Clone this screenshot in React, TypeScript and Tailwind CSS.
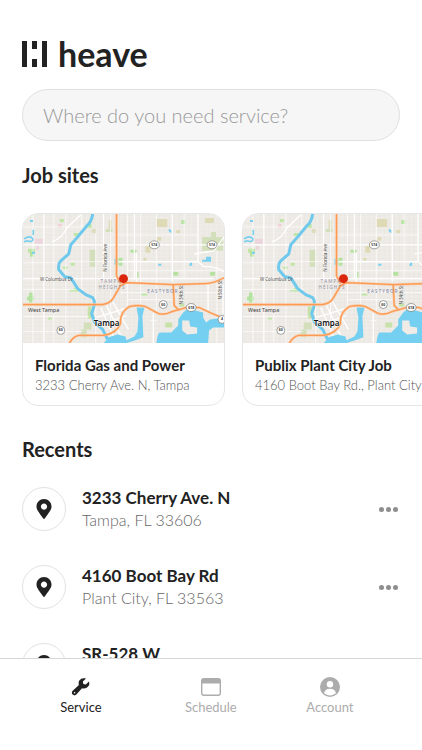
import { FaMapMarkerAlt } from 'react-icons/fa';

const jobSites = [
  { name: 'Florida Gas and Power', address: '3233 Cherry Ave. N, Tampa' },
  { name: 'Publix Plant City Job', address: '4160 Boot Bay Rd., Plant City' },
];

const recents = [
  { street: '3233 Cherry Ave. N', city: 'Tampa, FL 33606' },
  { street: '4160 Boot Bay Rd', city: 'Plant City, FL 33563' },
  { street: 'SR-528 W', city: 'Orlando, FL 32809' },
];

// [x, y, width, height, color]
const parks: [number, number, number, number, string][] = [
  [67, 36, 6, 17, '#d3dfba'],
  [69, 15, 4, 4, '#dedcbc'],
  [83, 15, 7, 3, '#d3dfba'],
  [86, 6, 3, 9, '#dedcbc'],
  [51, 19, 5, 3, '#bfe6a4'],
  [64, 10, 5, 4, '#bfe6a4'],
  [37, 5, 4, 3, '#bfe6a4'],
  [5, 35, 7, 4, '#bfe6a4'],
  [7, 38, 4, 5, '#b5e2a0'],
  [48, 49, 4, 3, '#bfe6a4'],
  [40, 53, 5, 2, '#bfe6a4'],
  [51, 74, 5, 3, '#bfe6a4'],
  [47, 76, 9, 2, '#bfe6a4'],
  [4, 83, 7, 4, '#b5e2a0'],
  [6, 79, 4, 10, '#b5e2a0'],
  [65, 93, 4, 12, '#c6e2a8'],
  [61, 109, 8, 7, '#d3dfba'],
  [58, 116, 6, 8, '#d3dfba'],
  [25, 104, 4, 2, '#bfe6a4'],
  [134, 5, 11, 8, '#dedab6'],
  [159, 6, 4, 4, '#b5e2a0'],
  [183, 4, 9, 5, '#dedab6'],
  [189, 18, 5, 5, '#d3dfba'],
  [180, 23, 21, 14, '#d3dfba'],
  [135, 23, 4, 4, '#dedab6'],
  [154, 16, 4, 3, '#dedab6'],
  [123, 32, 5, 7, '#dedab6'],
  [108, 36, 6, 3, '#b5e2a0'],
  [121, 44, 3, 3, '#dedab6'],
  [114, 58, 2, 6, '#b5e2a0'],
  [151, 58, 5, 4, '#b5e2a0'],
  [188, 58, 5, 4, '#b5e2a0'],
  [96, 44, 4, 8, '#b5e2a0'],
  [119, 80, 6, 2, '#bfe6a4'],
  [143, 109, 7, 5, '#c6e2a8'],
  [157, 90, 5, 3, '#c6e2a8'],
];

const minorStreets =
  'M10 0V130M31 0V130M43 0V130M59 0V76M73 20V130M88 0V130M105 0V92M118 0V94M134 0V98M162 0V66M195 36V130' +
  'M0 13H66M90 21H176M0 49H36M46 48H94M104 57H202M0 76H62M98 79H202M0 103H66M0 118H60M106 86H152M128 107H134';

const majorStreets =
  'M21 0V130M81 0V66M112 0V66M150 0V68M176 0V48L182 53Q193 52 202 58M114 39V68M0 31H202M202 23L192 37L172 40' +
  'M0 65H94M96 48H176M103 65H192M29 28Q39 25 44 14L58 1M131 100V130M186 71V98M201 71V100' +
  'M78 94L94 130M84 92L100 126M90 88L106 116M74 104L106 94M76 112L104 102';

const highways =
  'M0 91L80 91Q88 90 91 84L98 72L104 69L151 71L182 70Q192 70 202 64' +
  'M46 131Q50 123 56 122L81 122Q94 120 98 110Q97 99 107 93Q116 91 123 93L136 100Q142 102 150 98L164 94L177 94L190 100L202 105' +
  'M94 0V62L98 70M151 71L152 92L157 97';

const shields = [
  { x: 132, y: 31, label: '574', rx: 5 },
  { x: 190, y: 31, label: '574', rx: 5 },
  { x: 38, y: 117, label: '60', rx: 4 },
  { x: 141, y: 91, label: '60', rx: 4 },
  { x: 169, y: 94, label: '618', rx: 5 },
  { x: 200, y: 106, label: '4', rx: 4 },
];

function TampaMap() {
  return (
    <svg viewBox="0 0 202 130" className="block w-full" role="img" aria-label="Map of Tampa">
      <rect width="202" height="130" fill="#efece8" />
      {/* faint residential blocks */}
      <g stroke="#e7e4df" strokeWidth="0.5">
        {Array.from({ length: 41 }, (_, i) => (
          <path key={`v${i}`} d={`M${i * 5 + 2} 0V130`} />
        ))}
        {Array.from({ length: 33 }, (_, i) => (
          <path key={`h${i}`} d={`M0 ${i * 4 + 1}H202`} />
        ))}
      </g>
      <rect x="12" y="25" width="8" height="5" fill="#ecd5dc" />
      <rect x="35" y="10" width="4" height="4" fill="#efd3d6" />
      <rect x="13" y="32" width="3" height="4" fill="#ecd5dc" />
      {parks.map(([x, y, w, h, fill]) => (
        <rect key={`${x}-${y}`} x={x} y={y} width={w} height={h} rx="0.5" fill={fill} />
      ))}

      {/* streets */}
      <path d={minorStreets} fill="none" stroke="#fff" strokeWidth="0.7" />
      <path d={majorStreets} fill="none" stroke="#fff" strokeWidth="1.3" />

      {/* water */}
      <g fill="#75cff0">
        <path d="M134 130Q135 121 137 119H149L156 112V106L161 99L166 95L181 99V104L184 109L188 106L202 104V114H191L187 117L186 130Z" />
        <path d="M114 94H122L120 103L121 124L113 127L103 130H81L86 124L95 121L103 123L104 127L112 123L115 118L116 104Z" />
        <path d="M180 46H184V43H189V48H180ZM136 50H139V52H136ZM168 49H170V52H167ZM146 15L149 16V19L147 18Z" />
        <path d="M7 6H10V8H7ZM9 38H12V40H9ZM92 45H95V51H92Z" />
      </g>
      <path d="M160 107H167L168 113L175 114V120L165 121L160 117Z" fill="#efece8" />
      <path d="M1 25Q7 21 10 25Q10 29 4 27L1 28M10 16Q11 18 10 21" fill="none" stroke="#75cff0" strokeWidth="1.6" />
      <path
        d="M70 0Q69 8 64 12L55 23L48 31L46 40L38 47Q35 50 36 56L42 63L48 64L55 75L63 81L70 84Q73 88 71 94L69 100L72 109L80 116L85 126"
        fill="none"
        stroke="#6fc9ec"
        strokeWidth="3"
        strokeLinejoin="round"
      />

      {/* highways */}
      <path d={highways} fill="none" stroke="#ffc396" strokeWidth="2.4" strokeLinejoin="round" />
      <path d={highways} fill="none" stroke="#fb9a55" strokeWidth="1.2" strokeLinejoin="round" />

      {/* labels */}
      <g fontFamily="Noto Sans, sans-serif" fontSize="4.5" fill="#55534f">
        <text x="17" y="67">W Columbus Dr</text>
        <text x="5" y="99" fontSize="5.5" fill="#3e3d3b">West Tampa</text>
        <text transform="translate(84 58) rotate(-90)">N Florida Ave</text>
        <text transform="translate(161 91) rotate(-90)">N 34th St</text>
        <text transform="translate(200 86) rotate(-90)">N 50th St</text>
        <text x="78" y="69" fill="#9290a4">T A M P A</text>
        <text x="76" y="75" fill="#9290a4">H E I G H T S</text>
        <text x="125" y="79" fill="#8183a8">E A S T  Y B O R</text>
        <text x="71" y="113" fontSize="8" fontWeight="600" fill="#111" stroke="#fff" strokeWidth="1" paintOrder="stroke">
          Tampa
        </text>
      </g>
      {shields.map(({ x, y, label, rx }) => (
        <g key={`${x}-${y}`}>
          <ellipse cx={x} cy={y} rx={rx} ry="4" fill="#fff" stroke="#666" strokeWidth="0.6" />
          <text x={x} y={y + 1} textAnchor="middle" fontFamily="Noto Sans, sans-serif" fontSize="3.5" fontWeight="700" fill="#333">
            {label}
          </text>
        </g>
      ))}
      <circle cx="101" cy="65" r="4.5" fill="#d9260c" />
    </svg>
  );
}

function Logo() {
  return (
    <div className="flex items-center gap-2.5 text-[#222]">
      <svg viewBox="0 0 26 26" className="size-[26px]" fill="currentColor" aria-hidden="true">
        <path d="M0 0H5V26H0ZM10 0H15V8H10ZM10 18H15V26H10ZM20 0H25V26H20Z" />
      </svg>
      <h1 className="text-[34px] leading-8 font-bold">heave</h1>
    </div>
  );
}

function WrenchIcon() {
  return (
    <svg viewBox="0 0 20 20" className="size-5" aria-hidden="true">
      <path
        d="M17.9 4.4L14.8 7.5L12.3 7L11.9 4.6L15 1.6C12.5.6 9.6 1.3 8.3 3.6C7.5 5 7.4 6.6 7.9 8.1L1.7 13.8C.7 14.8.6 16.5 1.6 17.6C2.7 18.7 4.4 18.7 5.4 17.6L11 11.2C13.2 12 15.7 11.3 17.1 9.6C18.4 8.1 18.7 6.1 17.9 4.4Z"
        fill="currentColor"
      />
      <circle cx="3.6" cy="15.8" r="0.8" fill="#fff" />
    </svg>
  );
}

function ScheduleIcon() {
  return (
    <svg viewBox="0 0 20 20" className="size-5" aria-hidden="true">
      <rect x="0.7" y="1.7" width="18.6" height="16.6" rx="2" fill="none" stroke="currentColor" strokeWidth="1.4" />
      <path d="M1 2H19V6.5H1Z" fill="currentColor" />
    </svg>
  );
}

function AccountIcon() {
  return (
    <svg viewBox="0 0 20 20" className="size-5" aria-hidden="true">
      <circle cx="10" cy="10" r="10" fill="currentColor" />
      <circle cx="10" cy="7.3" r="3.2" fill="#fff" />
      <path d="M4 16C4.8 13.3 6.8 11.8 10 11.8S15.2 13.3 16 16C14.4 17.6 12.3 18.5 10 18.5S5.600 17.6 4 16Z" fill="#fff" />
    </svg>
  );
}

export default function App() {
  return (
    <div className="flex h-screen flex-col bg-white font-['Lato','Liberation_Sans',sans-serif] text-[#222]">
      <main className="min-h-0 flex-1 overflow-hidden pt-[38px]">
        <header className="px-[22px]">
          <Logo />
          <input
            type="search"
            aria-label="Service location"
            placeholder="Where do you need service?"
            className="mt-[19px] h-[52px] w-full rounded-full border border-[#e0e0e0] bg-[#f6f6f6] px-5 text-xl font-light outline-none placeholder:text-[#999]"
          />
        </header>

        <section className="pt-5">
          <h2 className="px-[22px] text-xl leading-7 font-bold">Job sites</h2>
          <div className="mt-6 flex gap-[17px] overflow-hidden pl-[22px]">
            {jobSites.map((site) => (
              <a
                key={site.name}
                href="#site"
                className="w-[203px] shrink-0 overflow-hidden rounded-2xl border border-[#e6e6e6]"
              >
                <TampaMap />
                <div className="px-3 pt-3 pb-2.5">
                  <h3 className="text-[15px] leading-5 font-bold whitespace-nowrap">{site.name}</h3>
                  <p className="text-[13px] leading-5 font-light whitespace-nowrap text-[#555]">{site.address}</p>
                </div>
              </a>
            ))}
          </div>
        </section>

        <section className="px-[22px] pt-[29px]">
          <h2 className="text-xl leading-7 font-bold">Recents</h2>
          <ul className="mt-6 flex flex-col gap-[34px]">
            {recents.map((place) => (
              <li key={place.street} className="flex items-center">
                <div className="flex size-11 shrink-0 items-center justify-center rounded-full border border-[#e2e2e2]">
                  <FaMapMarkerAlt className="size-5" />
                </div>
                <div className="ml-4 flex-1">
                  <h3 className="text-[17px] leading-[22px] font-bold">{place.street}</h3>
                  <p className="text-base leading-[22px] font-light text-[#666]">{place.city}</p>
                </div>
                <button type="button" aria-label={`More options for ${place.street}`} className="flex gap-[2px] pr-0.5">
                  <span className="size-[5px] rounded-full bg-[#8e8e8e]" />
                  <span className="size-[5px] rounded-full bg-[#8e8e8e]" />
                  <span className="size-[5px] rounded-full bg-[#8e8e8e]" />
                </button>
              </li>
            ))}
          </ul>
        </section>
      </main>

      <nav className="grid h-[92px] shrink-0 grid-cols-[6fr_6fr_5fr] items-start border-t border-[#d8d8d8] bg-white pt-[18px] pr-[38px] pl-4 text-[13px] leading-[18px] text-[#acacac]">
        <button type="button" className="flex flex-col items-center gap-px text-[#222]">
          <WrenchIcon />
          Service
        </button>
        <button type="button" className="flex flex-col items-center gap-px">
          <ScheduleIcon />
          Schedule
        </button>
        <button type="button" className="flex flex-col items-center gap-px">
          <AccountIcon />
          Account
        </button>
      </nav>
    </div>
  );
}
